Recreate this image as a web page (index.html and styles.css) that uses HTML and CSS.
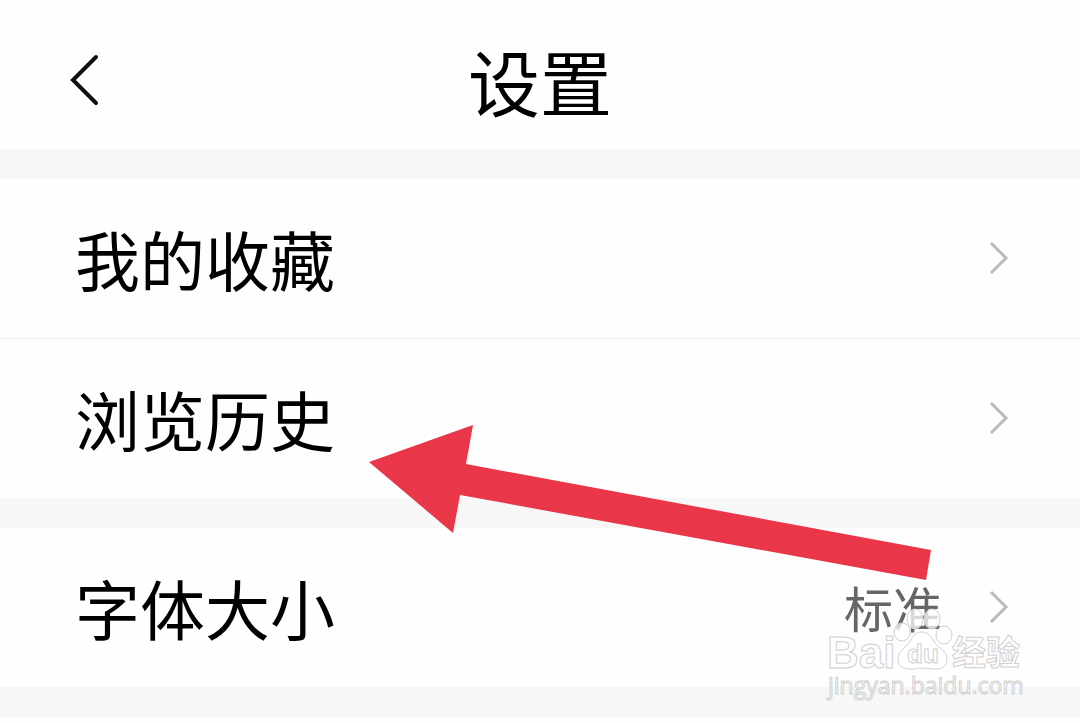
FILE: index.html
```html
<!DOCTYPE html>
<html lang="zh-CN">
<head>
<meta charset="utf-8">
<meta name="viewport" content="width=device-width, initial-scale=1">
<title>设置</title>
<link rel="stylesheet" href="styles.css">
</head>
<body>
<div class="page">
  <header class="header">
    <button class="back" type="button" aria-label="返回">
      <svg width="32" height="54" viewBox="0 0 32 54"><path d="M28 4 5 27 28 50"/></svg>
    </button>
    <h1 class="title">设置</h1>
  </header>
  <main class="settings">
    <section class="group">
      <a class="row" href="#favorites">
        <span class="label">我的收藏</span>
        <svg class="chevron" width="20" height="36" viewBox="0 0 20 36"><path d="M2 3 17 18 2 33"/></svg>
      </a>
      <a class="row" href="#history">
        <span class="label">浏览历史</span>
        <svg class="chevron" width="20" height="36" viewBox="0 0 20 36"><path d="M2 3 17 18 2 33"/></svg>
      </a>
    </section>
    <section class="group">
      <a class="row" href="#font-size">
        <span class="label">字体大小</span>
        <span class="value">标准</span>
        <svg class="chevron" width="20" height="36" viewBox="0 0 20 36"><path d="M2 3 17 18 2 33"/></svg>
      </a>
    </section>
  </main>
  <svg class="pointer" width="564" height="158" viewBox="0 0 564 158" aria-hidden="true">
    <path d="M1 38 105 1 98 40 563 126 558 156 92 71 85 109Z"/>
  </svg>
  <svg class="watermark" width="204" height="100" viewBox="0 0 204 100">
    <g class="paw">
      <ellipse cx="95" cy="19" rx="8" ry="10"/>
      <ellipse cx="112" cy="19" rx="8" ry="10"/>
      <ellipse cx="82" cy="32" rx="8" ry="9"/>
      <ellipse cx="124" cy="35" rx="8" ry="9"/>
      <path d="M102 32C95 32 92 38 89 43C85 48 78 51 78 59C78 66 83 69 90 69C96 69 98 68 102 68C107 68 110 69 116 69C123 69 127 65 127 59C127 51 119 48 115 43C112 38 109 32 102 32Z"/>
    </g>
    <text class="brand" x="7" y="68">Bai</text>
    <text class="du" x="87" y="63">du</text>
    <text class="cjk" x="132" y="65">经验</text>
    <text class="url" x="8" y="94">jingyan.baidu.com</text>
  </svg>
</div>
</body>
</html>
```
FILE: styles.css
```css
* {
  box-sizing: border-box;
}

body {
  margin: 0;
  background: #fefefe;
  color: #000;
  font-family: "Noto Sans CJK SC", sans-serif;
}

.page {
  position: relative;
  overflow: hidden;
}

.header {
  display: grid;
  grid-template-columns: 1fr auto 1fr;
  align-items: center;
  padding: 36px 68px 25px;
}

.back {
  justify-self: start;
  padding: 0;
  border: 0;
  background: none;
  line-height: 0;
}

.back path {
  fill: none;
  stroke: #111;
  stroke-width: 4;
  stroke-linecap: round;
}

.title {
  margin: 0;
  font-size: 72px;
  font-weight: 400;
  line-height: 88px;
}

.settings {
  display: grid;
  gap: 30px;
  padding: 30px 0;
  background: #f7f7f7;
}

.group {
  background: #fefefe;
}

.row {
  display: flex;
  align-items: center;
  min-height: 159px;
  padding: 0 71px 2px 75px;
  color: inherit;
  text-decoration: none;
}

.row + .row {
  border-top: 1px solid #eee;
  min-height: 160px;
}

.label {
  flex: 1;
  font-size: 65px;
  line-height: 80px;
}

.value {
  margin-right: 47px;
  color: #666;
  font-size: 49px;
  line-height: 60px;
}

.chevron path {
  fill: none;
  stroke: #bbb;
  stroke-width: 3;
}

.pointer {
  position: absolute;
  top: 424px;
  left: 368px;
  fill: #e93648;
}

.watermark {
  position: absolute;
  top: 600px;
  right: 56px;
  fill: rgba(255, 255, 255, 0.75);
  stroke: #d0d0d0;
  stroke-width: 1;
  overflow: visible;
}

.watermark text {
  font-family: "Liberation Sans", "Noto Sans CJK SC", sans-serif;
}

.watermark .brand {
  font-size: 44px;
  font-weight: 700;
}

.watermark .du {
  font-size: 26px;
  font-weight: 700;
}

.watermark .cjk {
  font-family: "Noto Sans CJK SC", sans-serif;
  font-size: 34px;
  font-weight: 700;
}

.watermark .url {
  font-family: "Open Sans", sans-serif;
  font-size: 23px;
}
```
